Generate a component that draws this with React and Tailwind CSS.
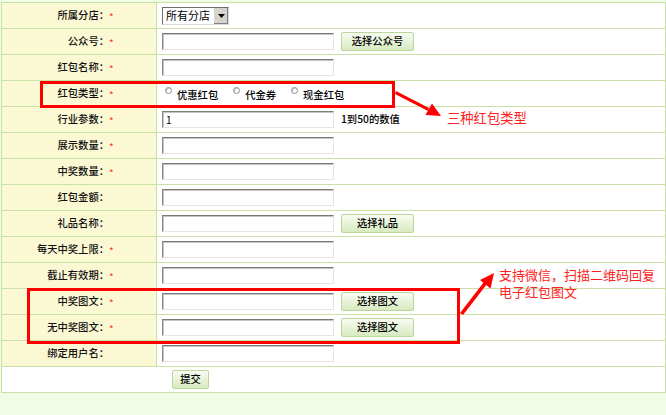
import React from "react";

const FONT = { fontFamily: '"SimSun", "Noto Sans CJK SC", "Liberation Sans", sans-serif' };

const rows = [
  { label: "所属分店：", star: true, kind: "select" },
  { label: "公众号：", star: true, btn: "选择公众号" },
  { label: "红包名称：", star: true },
  { label: "红包类型：", star: true, kind: "radio" },
  { label: "行业参数：", star: true, value: "1", note: "1到50的数值" },
  { label: "展示数量：", star: true },
  { label: "中奖数量：", star: true },
  { label: "红包金额：", star: false },
  { label: "礼品名称：", star: false, btn: "选择礼品" },
  { label: "每天中奖上限：", star: true },
  { label: "截止有效期：", star: true },
  { label: "中奖图文：", star: true, btn: "选择图文" },
  { label: "无中奖图文：", star: true, btn: "选择图文" },
  { label: "绑定用户名：", star: false },
];

const TextBox = ({ value }) => (
  <div className="w-[172px] h-[17px] bg-white border border-t-[#7a7a7a] border-l-[#8a8a8a] border-r-[#e4e4e4] border-b-[#e4e4e4] shadow-[inset_1px_1px_0_#c4c4c4] flex items-center pl-[3px] text-[10px] text-black leading-none">
    {value}
  </div>
);

const Btn = ({ children, w = "w-[73px]" }) => (
  <div
    className={`${w} h-[19px] flex items-center justify-center rounded-[2px] border border-[#bcd69c] bg-gradient-to-b from-[#f8fcf1] to-[#d7eac1] text-[10.3px] text-black font-medium leading-none`}
  >
    {children}
  </div>
);

const Radio = ({ text }) => (
  <div className="flex items-center mr-[15px]">
    <span className="w-[7px] h-[7px] rounded-full border border-[#8d8d8d] bg-white shadow-[inset_1px_1px_0_#cfcfcf] -mt-[6px]" />
    <span className="ml-[5px] text-[10.3px] text-black font-medium leading-none mt-[3px]">{text}</span>
  </div>
);

const Field = ({ row }) => {
  if (row.kind === "select") {
    return (
      <div className="w-[67px] h-[18px] flex items-stretch bg-white border border-t-[#6d6d6d] border-l-[#6d6d6d] border-r-[#d8d8d8] border-b-[#d8d8d8]">
        <span className="flex-1 flex items-center pl-[3px] text-[11px] text-black leading-none">所有分店</span>
        <span className="w-[15px] flex items-center justify-center bg-[#d6d3cc] border-l border-[#ffffff] shadow-[inset_-1px_-1px_0_#808080]">
          <svg width="7" height="4" viewBox="0 0 7 4">
            <polygon points="0,0 7,0 3.5,4" fill="#000" />
          </svg>
        </span>
      </div>
    );
  }
  if (row.kind === "radio") {
    return (
      <div className="flex items-center pl-[3px]">
        <Radio text="优惠红包" />
        <Radio text="代金券" />
        <Radio text="现金红包" />
      </div>
    );
  }
  return (
    <div className="flex items-center gap-[7px]">
      <TextBox value={row.value} />
      {row.btn && <Btn>{row.btn}</Btn>}
      {row.note && <span className="text-[10.3px] text-black font-medium leading-none">{row.note}</span>}
    </div>
  );
};

export default function App() {
  return (
    <div className="relative w-[666px] h-[415px] overflow-hidden bg-[#f1fce5] pt-[2px] pl-[1px]" style={FONT}>
      <div className="border-l border-r border-t border-[#c9e1a6] bg-white">
        {rows.map((row, i) => (
          <div key={i} className="flex h-[26px] border-b border-[#c9e1a6]">
            <div className="w-[155px] shrink-0 bg-[#fbf8d4] border-r border-[#c9e1a6] flex items-center justify-end pr-[39px]">
              <span className="text-[10.3px] text-[#111] font-medium leading-none">{row.label}</span>
              <span className="w-[8px] text-[10px] text-[#f33] leading-none pt-[3px]">{row.star ? "*" : ""}</span>
            </div>
            <div className="flex-1 flex items-center pl-[5px]">
              <Field row={row} />
            </div>
          </div>
        ))}
        <div className="flex items-center h-[26px] border-b border-[#c9e1a6] pl-[170px]">
          <Btn w="w-[37px]">提交</Btn>
        </div>
      </div>

      {/* annotations */}
      <div className="absolute left-[40px] top-[81px] w-[355px] h-[27px] border-[3px] border-[#f00]" />
      <div className="absolute left-[27px] top-[288px] w-[433px] h-[56px] border-[3px] border-[#f00]" />

      <svg className="absolute left-0 top-0 pointer-events-none" width="666" height="415" viewBox="0 0 666 415">
        <polygon points="396,91 429,108 428,111 395,94" fill="#f00" />
        <polygon points="441,116 425.5,115 432,103.5" fill="#f00" />
        <polygon points="460,313 484,282 487,284 463,315" fill="#f00" />
        <polygon points="494,273 490.5,288.5 480,280" fill="#f00" />
      </svg>

      <div className="absolute left-[447px] top-[111px] text-[13.3px] leading-none text-[#f22]">三种红包类型</div>
      <div className="absolute left-[499px] top-[266px] text-[13px] leading-[17px] text-[#f22]">
        <div className="h-[17px]">支持微信，扫描二维码回复</div>
        <div className="h-[17px]">电子红包图文</div>
      </div>
    </div>
  );
}
